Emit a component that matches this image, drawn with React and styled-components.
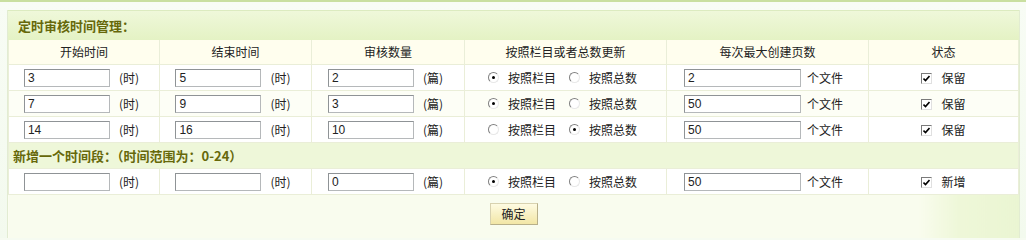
import React, { useState } from 'react';
import styled, { createGlobalStyle } from 'styled-components';

const GlobalStyle = createGlobalStyle`
  body {
    margin: 0;
    background: #f6fbf1;
    font-family: "Noto Sans CJK SC", "Liberation Sans", sans-serif;
    font-size: 12px;
    line-height: 16px;
    color: #222;
  }
`;

// top strip of the page
const Page = styled.div`
  width: 1026px;
  height: 238px;
  border-top: 2px solid #c9dfa0;
  box-sizing: border-box;
  padding: 8px 8px 0 7px;
  background: linear-gradient(#f8fcf5, #f3faee);
  overflow: hidden;
`;

const Panel = styled.div`
  width: 1011px;
  border-left: 1px solid #e2ecd2;
  border-right: 1px solid #e2ecd2;
  border-bottom: 1px solid #e2ecd2;
  background: #fbfdf1;
`;

const Title = styled.div`
  height: 29px;
  line-height: 29px;
  padding-left: 10px;
  font-weight: bold;
  font-size: 13px;
  color: #66680a;
  background: linear-gradient(#eff8da, #e4f2c4);
  border-top: 1px solid #dcebc0;
`;

const Table = styled.table`
  width: 100%;
  border-collapse: collapse;
  table-layout: fixed;
`;

const Th = styled.td`
  height: 24px;
  padding: 0;
  text-align: center;
  font-weight: normal;
  background: #fffeee;
  border: 1px solid #eaeed8;
  border-top: none;
`;

const Tr = styled.tr`
  background: ${p => (p.$alt ? '#fdfef6' : '#ffffff')};
`;

const Td = styled.td`
  height: 25px;
  padding: 0 ${p => p.$shift || 0}px 0 0;
  text-align: center;
  border: 1px solid #eaeed8;
  white-space: nowrap;
`;

const Section = styled.td`
  height: 25px;
  padding: 0 0 0 4px;
  font-weight: bold;
  font-size: 13px;
  color: #66680a;
  background: #eef7d9;
  border: 1px solid #eaeed8;
`;

const Input = styled.input`
  width: ${p => p.$w || 86}px;
  height: 18px;
  box-sizing: border-box;
  padding: 0 3px;
  margin: 0 ${p => p.$gap || 9}px 0 0;
  vertical-align: middle;
  border: 1px solid #b5b8ba;
  border-top-color: #8f9396;
  border-left-color: #8f9396;
  font-family: "Liberation Sans", sans-serif;
  font-size: 12px;
  color: #222;
  background: #fff;
`;

const Unit = styled.span`
  display: inline-block;
  vertical-align: middle;
  padding-right: ${p => p.$trail || 0}px;
`;

const Options = styled.div`
  display: flex;
  justify-content: center;
  align-items: center;
  gap: 13px;
  padding-right: 6px;
`;

const Option = styled.label`
  display: inline-flex;
  align-items: center;
  gap: 9px;
  vertical-align: middle;
`;

// classic sunken radio
const Radio = styled.span`
  width: 11px;
  height: 11px;
  border-radius: 50%;
  box-sizing: border-box;
  border: 1px solid;
  border-color: #808080 #e8e8e8 #e8e8e8 #808080;
  background: #fff;
  display: inline-flex;
  align-items: center;
  justify-content: center;
  &::after {
    content: '';
    width: 3px;
    height: 3px;
    border-radius: 50%;
    background: ${p => (p.$on ? '#000' : 'transparent')};
  }
`;

// classic sunken checkbox
const Check = styled.span`
  width: 11px;
  height: 11px;
  box-sizing: border-box;
  border: 1px solid;
  border-color: #7a7a7a #e0e0e0 #e0e0e0 #7a7a7a;
  background: #fff;
  display: inline-flex;
  align-items: center;
  justify-content: center;
`;

const ButtonRow = styled.td`
  height: 37px;
  padding: 0 0 7px;
  text-align: center;
  background: linear-gradient(90deg, #f9fcee 90%, #eef7d8 94%, #eaf5d2 100%);
`;

const Button = styled.button`
  width: 48px;
  height: 22px;
  font-family: "Noto Sans CJK SC", sans-serif;
  font-size: 12px;
  color: #222;
  border: 1px solid #d8d2b0;
  border-right-color: #b8b08a;
  border-bottom-color: #b8b08a;
  background: linear-gradient(#fefbe2, #f2e6a6);
  padding: 0;
`;

const rows = [
  { start: '3', end: '5', num: '2', byCol: true, max: '2' },
  { start: '7', end: '9', num: '3', byCol: true, max: '50' },
  { start: '14', end: '16', num: '10', byCol: false, max: '50' },
];

function CheckMark() {
  return (
    <svg width="7" height="7" viewBox="0 0 7 7">
      <path d="M0.5 3.5 L2.5 5.5 L6.5 1" stroke="#000" strokeWidth="1.6" fill="none" />
    </svg>
  );
}

function RowCells({ start, end, num, byCol, max, status }) {
  return (
    <>
      <Td><Input defaultValue={start} /><Unit $trail={5}>(时)</Unit></Td>
      <Td><Input defaultValue={end} /><Unit $trail={5}>(时)</Unit></Td>
      <Td><Input defaultValue={num} /><Unit $trail={5}>(篇)</Unit></Td>
      <Td>
        <Options>
          <Option><Radio $on={byCol} />按照栏目</Option>
          <Option><Radio $on={!byCol} />按照总数</Option>
        </Options>
      </Td>
      <Td $shift={8}><Input $w={117} $gap={6} defaultValue={max} /><Unit>个文件</Unit></Td>
      <Td>
        <Option><Check><CheckMark /></Check>{status}</Option>
      </Td>
    </>
  );
}

export default function App() {
  const [saved] = useState(rows);

  return (
    <Page>
      <GlobalStyle />
      <Panel>
        <Title>定时审核时间管理：</Title>
        <Table>
          <colgroup>
            <col style={{ width: 151 }} />
            <col style={{ width: 152 }} />
            <col style={{ width: 153 }} />
            <col style={{ width: 202 }} />
            <col style={{ width: 202 }} />
            <col />
          </colgroup>
          <tbody>
            <tr>
              <Th>开始时间</Th>
              <Th>结束时间</Th>
              <Th>审核数量</Th>
              <Th>按照栏目或者总数更新</Th>
              <Th>每次最大创建页数</Th>
              <Th>状态</Th>
            </tr>
            {saved.map((r, i) => (
              <Tr key={i} $alt={i % 2 === 1}>
                <RowCells {...r} status="保留" />
              </Tr>
            ))}
            <tr>
              <Section colSpan={6}>新增一个时间段：（时间范围为：0-24）</Section>
            </tr>
            <Tr>
              <RowCells start="" end="" num="0" byCol max="50" status="新增" />
            </Tr>
            <tr>
              <ButtonRow colSpan={6}><Button>确定</Button></ButtonRow>
            </tr>
          </tbody>
        </Table>
      </Panel>
    </Page>
  );
}
